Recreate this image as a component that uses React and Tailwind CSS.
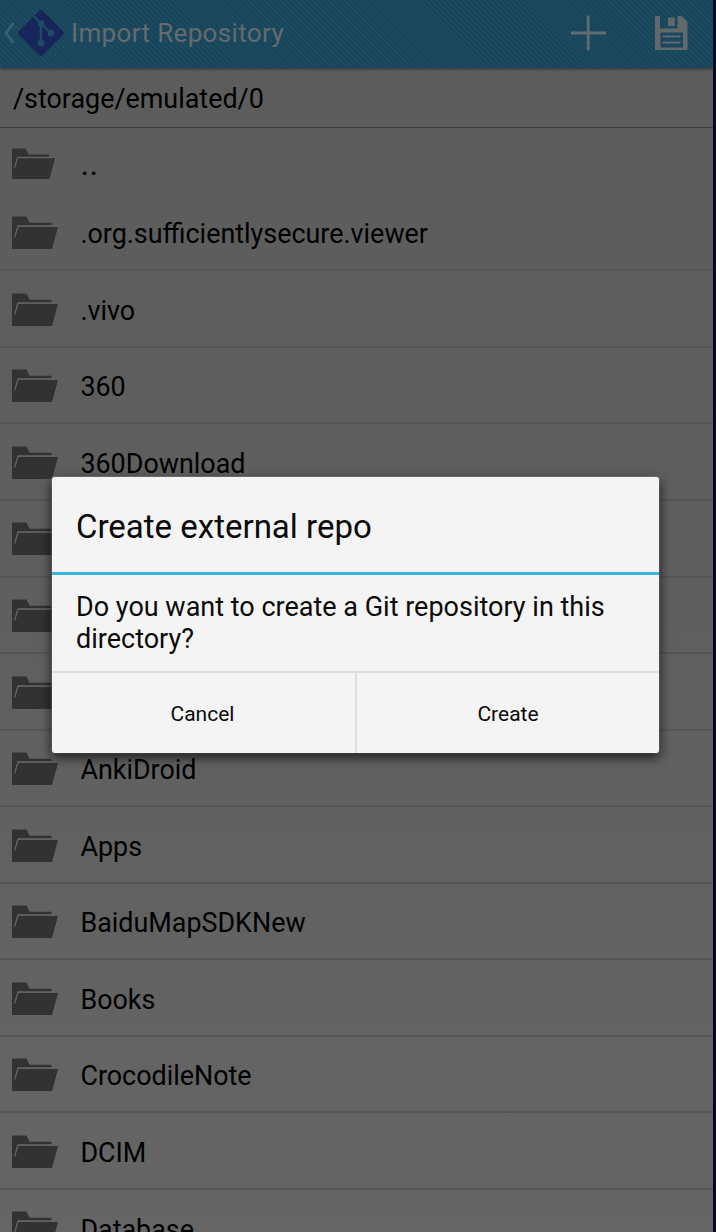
const rows = [
  '.org.sufficientlysecure.viewer',
  '.vivo',
  '360',
  '360Download',
  '',
  '',
  '',
  'AnkiDroid',
  'Apps',
  'BaiduMapSDKNew',
  'Books',
  'CrocodileNote',
  'DCIM',
  'Database',
];

function Folder({ className }) {
  return (
    <svg className={className} viewBox="0 0 47 34" preserveAspectRatio="none" fill="#323232">
      <path d="M0 .5H14.500L17.500 6.800H39.500V9.300H5.500L2.300 20.500L3 21L6.300 11H46L40 33H0Z" />
      <path d="M2.800 21.500L6 10.100H45.500" fill="none" stroke="#626262" strokeWidth="1" />
    </svg>
  );
}

function GitLogo() {
  return (
    <svg className="h-[50px] w-[50px] shrink-0" viewBox="0 0 50 50">
      <rect x="8" y="8" width="34" height="34" rx="3" transform="rotate(45 25 25)" fill="#16265a" />
      <g stroke="#1d4a64" strokeWidth="2.400" fill="none">
        <path d="M17.500 8L25 15.500V34M25 15.500L34.500 25" />
      </g>
      <g fill="#1d4a64">
        <circle cx="25" cy="15.500" r="3.200" />
        <circle cx="25" cy="35" r="3.500" />
        <circle cx="35" cy="25" r="3.500" />
      </g>
    </svg>
  );
}

function Header() {
  return (
    <header className="flex h-[68px] shrink-0 items-center bg-[repeating-linear-gradient(45deg,#16465e_0px,#16465e_1.800px,#264d5b_2.800px,#16465e_3.800px)] shadow-[0_1px_3px_rgba(0,0,0,0.5)]">
      <svg className="ml-[4px] mt-[-3px] h-[22px] w-[11px] shrink-0" viewBox="0 0 11 22" fill="none" stroke="#3d5f6d" strokeWidth="2.800">
        <path d="M9.500 1L2 11L9.500 21" />
      </svg>
      <div className="ml-px mt-[-3px] h-[50px] w-[50px] shrink-0">
        <GitLogo />
      </div>
      <h1 className="ml-[5px] mt-[-2px] whitespace-nowrap text-[26px] leading-[32px] tracking-[0.350px] text-[#646a6d]">Import Repository</h1>
      <svg className="ml-auto mr-[48px] mt-[-3px] h-[36px] w-[36px]" viewBox="0 0 36 36" stroke="#5f6c72" strokeWidth="2.800" fill="none">
        <path d="M17.200 .5V35.500M0 18H35" />
      </svg>
      <svg className="mr-[24px] mt-[-3px] h-[34px] w-[34px]" viewBox="0 0 34 34">
        <path fill="#61696d" fillRule="evenodd" d="M0 0H5V12.500H22.500V0H26.500L32.500 6V34H0ZM5.500 16.500V31.500H28V16.500Z" />
        <path fill="#61696d" d="M13 1.500H19.800V10H13ZM7.500 19.500H25.500V21.500H7.500ZM7.500 25.500H25.500V27.500H7.500Z" />
      </svg>
    </header>
  );
}

function Dialog() {
  return (
    <section className="absolute left-[52px] top-[477px] flex h-[276px] w-[607px] flex-col rounded-[3px] bg-[#f4f4f4] text-[#0a0a0a] shadow-[0_4px_11px_1px_rgba(0,0,0,0.65),0_0_1px_0.500px_rgba(150,150,150,0.6)]">
      <h2 className="h-[95px] shrink-0 whitespace-nowrap pl-[24px] pt-[30px] text-[33px] leading-[40px]">Create external repo</h2>
      <div className="h-[3px] shrink-0 bg-[#38b5e2]" />
      <p className="h-[96px] shrink-0 whitespace-nowrap pl-[24px] pt-[16px] text-[27px] leading-[32px]">
        Do you want to create a Git repository in this<br />directory?
      </p>
      <div className="flex grow border-t-2 border-[#dedede] text-[21px]">
        <button className="w-[305px] border-r-2 border-[#dedede] pt-[4px] pr-[2px]">Cancel</button>
        <button className="grow pt-[4px]">Create</button>
      </div>
    </section>
  );
}

export default function App() {
  return (
    <main className="relative flex h-[1232px] w-[716px] overflow-hidden bg-[#090722] font-[Roboto,sans-serif]">
      <div className="flex w-[713px] flex-col overflow-hidden bg-[linear-gradient(#5c5c5c,#5f5f5f_50%,#656565)] text-black">
        <Header />
        <div className="h-[60px] shrink-0 border-b border-[#3d3d3d] pl-[13px] pt-[15px] text-[26.900px] leading-[32px]">/storage/emulated/0</div>
        <div className="flex h-[66.800px] shrink-0">
          <Folder className="ml-[12px] mt-[20px] h-[32px] w-[44px]" />
          <span className="ml-[25px] mt-[22px] text-[27px] font-medium leading-[32px] tracking-[1.500px]">..</span>
        </div>
        <ul className="shrink-0">
          {rows.map((name, i) => (
            <li key={i} className="flex h-[76.550px] items-start border-b-2 border-[#565656]">
              <Folder className="ml-[12px] mt-[21.500px] h-[34px] w-[47px] shrink-0" />
              <span className="ml-[21.400px] mt-[23.600px] whitespace-nowrap text-[26.900px] leading-[32px]">{name}</span>
            </li>
          ))}
        </ul>
      </div>
      <Dialog />
    </main>
  );
}
